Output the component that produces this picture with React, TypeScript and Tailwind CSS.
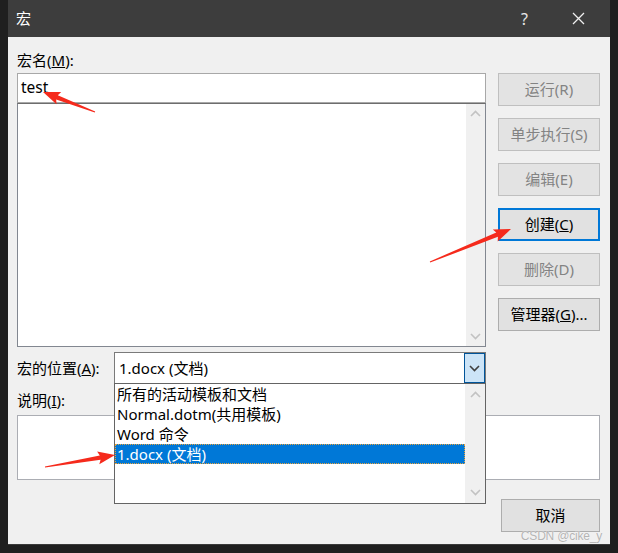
import React from 'react';

const font = "font-['Noto_Sans','Noto_Sans_CJK_SC',sans-serif]";

function arrowPoints(x1: number, y1: number, x2: number, y2: number) {
  const dx = x2 - x1;
  const dy = y2 - y1;
  const len = Math.sqrt(dx * dx + dy * dy);
  const ux = dx / len;
  const uy = dy / len;
  const px = -uy;
  const py = ux;
  const head = 15;
  const bx = x2 - ux * head;
  const by = y2 - uy * head;
  const pts = [
    [x1 + px * 0.6, y1 + py * 0.6],
    [bx + px * 2.2, by + py * 2.2],
    [bx - ux * 2 + px * 6.5, by - uy * 2 + py * 6.5],
    [x2, y2],
    [bx - ux * 2 - px * 6.5, by - uy * 2 - py * 6.5],
    [bx - px * 2.2, by - py * 2.2],
    [x1 - px * 0.6, y1 - py * 0.6],
  ];
  return pts.map((p) => `${p[0].toFixed(1)},${p[1].toFixed(1)}`).join(' ');
}

function Chevron({ up, color }: { up?: boolean; color: string }) {
  return (
    <svg width="11" height="7" viewBox="0 0 11 7">
      <polyline
        points={up ? '1,6 5.5,1.5 10,6' : '1,1 5.5,5.5 10,1'}
        fill="none"
        stroke={color}
        strokeWidth="1.6"
      />
    </svg>
  );
}

function Btn({ children, disabled, focused }: { children: React.ReactNode; disabled?: boolean; focused?: boolean }) {
  return (
    <div
      className={
        'w-[102px] h-[33px] flex items-center justify-center text-[15px] ' +
        (focused
          ? 'border-2 border-[#0078d7] bg-[#e1e1e1] text-black'
          : disabled
          ? 'border border-[#bfbfbf] bg-[#e3e3e3] text-[#838383]'
          : 'border border-[#adadad] bg-[#e1e1e1] text-black')
      }
    >
      {children}
    </div>
  );
}

export default function App() {
  return (
    <div className={`w-[618px] h-[553px] bg-[#1f1f1f] px-[8px] pb-[8px] relative ${font}`}>
      <div className="w-full h-full flex flex-col border-b border-[#3a3a3a]">
        <div className="h-[37px] bg-[#3d3d3d] flex items-center text-white text-[15px]">
          <span className="pl-[8px]">宏</span>
          <span className="ml-auto mr-[44px] text-[16px] text-[#e8e8e8]">?</span>
          <svg width="13" height="13" viewBox="0 0 13 13" className="mr-[25px]">
            <path d="M1 1 L12 12 M12 1 L1 12" stroke="#f0f0f0" strokeWidth="1.3" />
          </svg>
        </div>

        <div className="flex-1 bg-[#f0f0f0] relative pl-[9px] pt-[12px]">
          <div className="flex gap-[12px]">
            <div className="w-[469px] flex flex-col">
              <div className="h-[22px] leading-[22px] text-[15px] text-black mb-[2px]">
                宏名(<span className="underline">M</span>):
              </div>
              <div className="h-[30px] border border-[#a8a8a8] bg-white flex items-center pl-[3px] text-[15.5px] text-black">
                test
              </div>
              <div className="h-[244px] border border-[#828790] border-t-[#6d6d6d] bg-white flex justify-end">
                <div className="w-[19px] h-full bg-[#f0f0f0] flex flex-col items-center justify-between py-[6px]">
                  <Chevron up color="#c2c2c2" />
                  <Chevron color="#c2c2c2" />
                </div>
              </div>
            </div>
            <div className="w-[102px] flex flex-col gap-[12px] pt-[24px]">
              <Btn disabled>运行(R)</Btn>
              <Btn disabled>单步执行(S)</Btn>
              <Btn disabled>编辑(E)</Btn>
              <Btn focused>
                创建(<span className="underline">C</span>)
              </Btn>
              <Btn disabled>删除(D)</Btn>
              <Btn>
                管理器(<span className="underline">G</span>)...
              </Btn>
            </div>
          </div>

          <div className="flex items-center mt-[5px]">
            <div className="w-[97px] text-[15px] text-black">
              宏的位置(<span className="underline">A</span>):
            </div>
            <div className="relative w-[372px] h-[32px] border border-[#7a7a7a] bg-white flex items-center z-10">
              <span className="pl-[4px] text-[15px] text-black">1.docx (文档)</span>
              <div className="ml-auto w-[21px] h-full bg-[#cce4f7] border border-[#005499] flex items-center justify-center">
                <Chevron color="#404040" />
              </div>
              <div className="absolute left-[-1px] top-full w-[372px] h-[121px] border border-[#646464] bg-white flex text-[15px] text-black">
                <div className="flex-1 flex flex-col">
                  <div className="h-[20px] leading-[20px] pl-[2px]">所有的活动模板和文档</div>
                  <div className="h-[20px] leading-[20px] pl-[2px]">Normal.dotm(共用模板)</div>
                  <div className="h-[20px] leading-[20px] pl-[2px]">Word 命令</div>
                  <div className="h-[20px] leading-[18px] pl-[1px] bg-[#0078d7] text-white border border-dotted border-[#e8a33d]">
                    1.docx (文档)
                  </div>
                </div>
                <div className="w-[20px] h-full bg-[#f0f0f0] flex flex-col items-center justify-between py-[7px]">
                  <Chevron up color="#c2c2c2" />
                  <Chevron color="#c2c2c2" />
                </div>
              </div>
            </div>
          </div>

          <div className="h-[22px] leading-[22px] mt-[5px] text-[15px] text-black">
            说明(<span className="underline">I</span>):
          </div>
          <div className="w-[583px] h-[65px] mt-[4px] border border-[#abadb3] bg-white" />

          <div className="w-[583px] flex justify-end mt-[19px]">
            <div className="w-[99px] h-[33px] border border-[#adadad] bg-[#e1e1e1] flex items-center justify-center text-[15px] text-black">
              取消
            </div>
          </div>

          <div className="absolute right-[8px] bottom-[0px] text-[12px] leading-[15px] tracking-[-0.2px] text-[#b4b4b4] font-['Liberation_Sans',sans-serif] [text-shadow:0_0_1px_#ffffff]">
            CSDN @cike_y
          </div>
        </div>
      </div>

      <svg className="absolute inset-0 pointer-events-none z-20" width="618" height="553">
        <polygon points={arrowPoints(95, 112, 43, 92)} fill="#f52a1c" />
        <polygon points={arrowPoints(430, 262, 511, 229)} fill="#f52a1c" />
        <polygon points={arrowPoints(45, 467, 115, 455)} fill="#f52a1c" />
      </svg>
    </div>
  );
}
